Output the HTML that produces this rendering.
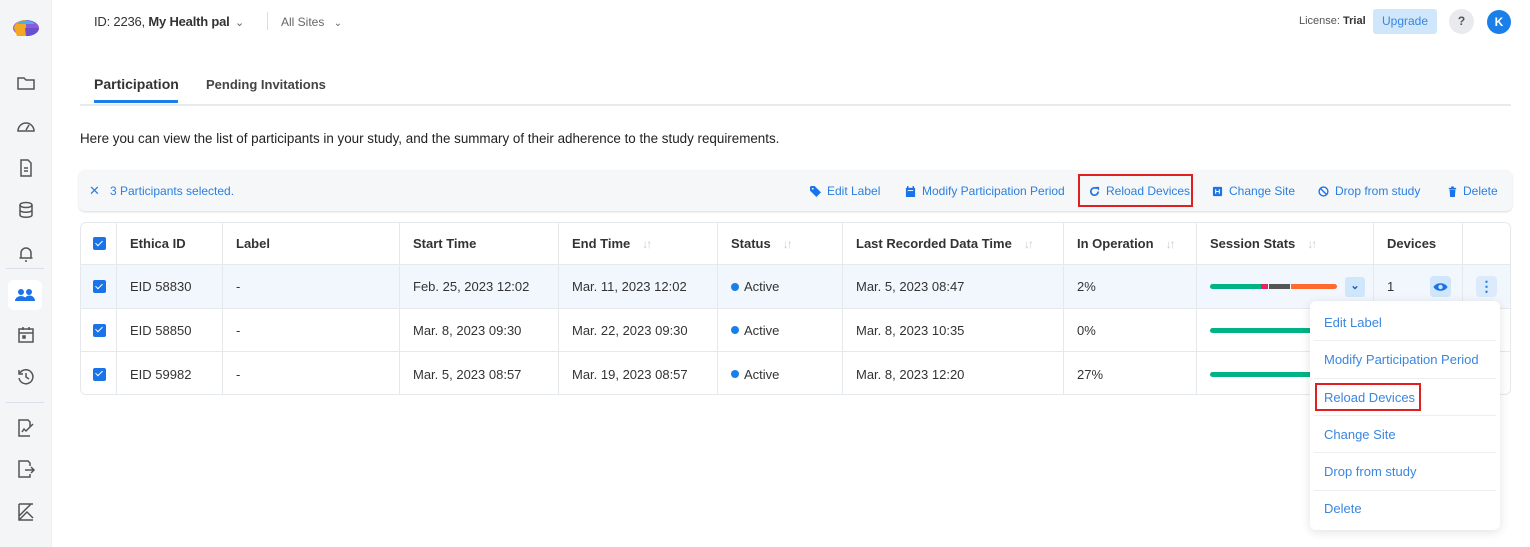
<!DOCTYPE html>
<html><head><meta charset="utf-8"><style>
*{box-sizing:border-box;margin:0;padding:0}
body{width:1530px;height:547px;overflow:hidden;background:#fff;font-family:"Liberation Sans",sans-serif;color:#222;position:relative;font-size:13px}
.side{position:absolute;left:0;top:0;width:52px;height:547px;background:#f4f5f6;border-right:1px solid #eceef0}
.ic{position:absolute;left:16px;width:20px;height:20px}
.abs{position:absolute}
.blue{color:#2a7fe0}
.tbl{position:absolute;left:80px;top:222px;width:1431px;border:1px solid #e6e9ec;border-radius:6px;overflow:hidden}
.tbl div.r{position:absolute;left:0;width:1431px;border-bottom:1px solid #e6e9ec}
.cell{position:absolute;top:0;height:100%;display:flex;align-items:center;padding-left:13px;border-right:1px solid #e6e9ec;font-size:13px;color:#333}
.h .cell{font-weight:bold;color:#333}
.cb{width:13px;height:13px;background:#1a73e8;border-radius:2px;position:relative}
.cb:after{content:"";position:absolute;left:4px;top:1.5px;width:3px;height:6px;border:solid #fff;border-width:0 1.6px 1.6px 0;transform:rotate(45deg)}
.sort{color:#ccc;margin-left:12px;font-weight:normal;font-size:12px;letter-spacing:-2px}
.dot{width:8px;height:8px;border-radius:50%;background:#1a7fe8;display:inline-block;margin-right:5px}
.bar{height:5px;border-radius:3px;background:#00b386}
.act{position:absolute;top:184px;font-size:12px;color:#2a7fe0;display:flex;align-items:center;gap:6px}
.act svg{width:11px;height:11px}
.menu{position:absolute;left:1310px;top:301px;width:190px;height:229px;background:#fff;border-radius:6px;box-shadow:0 2px 10px rgba(0,0,0,.12)}
.mi{position:absolute;left:14px;font-size:13px;color:#3a86e0}
.sep{position:absolute;left:4px;right:4px;height:1px;background:#eceef0}
</style></head><body>
<div class="side">
 <svg class="abs" style="left:11px;top:18px" width="30" height="22" viewBox="0 0 30 22"><ellipse cx="15" cy="10" rx="13" ry="8" fill="#8a5ad8"/><path d="M3 10a12 8 0 0 1 12-8v16H6z" fill="#f5a623"/><path d="M6 6a10 6 0 0 1 18 0z" fill="#3bb6e6"/><path d="M14 10h14a12 8 0 0 1-13 8z" fill="#6a4fcf"/></svg>
 <svg class="ic" style="top:73px" viewBox="0 0 20 20" fill="none" stroke="#555" stroke-width="1.5"><path d="M2 5h6l2 2h8v9H2z"/></svg>
 <svg class="ic" style="top:116px" viewBox="0 0 20 20" fill="none" stroke="#555" stroke-width="1.5"><path d="M2 15a8 8 0 1 1 16 0z"/><path d="M10 14l3-5"/></svg>
 <svg class="ic" style="top:158px" viewBox="0 0 20 20" fill="none" stroke="#555" stroke-width="1.5"><path d="M5 2h7l3 3v13H5z"/><path d="M8 10h4M8 13h4"/></svg>
 <svg class="ic" style="top:200px" viewBox="0 0 20 20" fill="none" stroke="#555" stroke-width="1.5"><ellipse cx="10" cy="5" rx="6" ry="2.5"/><path d="M4 5v10c0 3 12 3 12 0V5M4 10c0 3 12 3 12 0"/></svg>
 <svg class="ic" style="top:244px" viewBox="0 0 20 20" fill="none" stroke="#555" stroke-width="1.5"><path d="M5 14V9a5 5 0 0 1 10 0v5h1.5H3.5zM9 17h2"/></svg>
 <div class="abs" style="left:6px;top:268px;width:38px;height:1px;background:#dde"></div>
 <div class="abs" style="left:8px;top:280px;width:34px;height:30px;background:#fff;border-radius:6px"></div>
 <svg class="ic" style="top:286px;left:15px" viewBox="0 0 20 20" fill="#1a73e8"><circle cx="6" cy="6" r="3"/><circle cx="14" cy="6" r="3"/><path d="M0 15a6 5 0 0 1 12 0zM9 15a5 5 0 0 1 11 0z"/></svg>
 <svg class="ic" style="top:325px" viewBox="0 0 20 20" fill="none" stroke="#555" stroke-width="1.5"><rect x="3" y="4" width="14" height="13"/><path d="M3 8h14M7 2v3M13 2v3"/><rect x="7" y="11" width="2" height="2" fill="#555"/></svg>
 <svg class="ic" style="top:367px" viewBox="0 0 20 20" fill="none" stroke="#555" stroke-width="1.5"><path d="M4 6a7 7 0 1 1-1 5M3 3v4h4M10 6v4l3 2"/></svg>
 <div class="abs" style="left:6px;top:402px;width:38px;height:1px;background:#dde"></div>
 <svg class="ic" style="top:418px" viewBox="0 0 20 20" fill="none" stroke="#555" stroke-width="1.5"><path d="M14 9V4l-2-2H3v16h11M6 14l2-3 2 2 7-7"/></svg>
 <svg class="ic" style="top:459px" viewBox="0 0 20 20" fill="none" stroke="#555" stroke-width="1.5"><path d="M14 7V4l-2-2H3v16h11v-3M9 11h9M15 8l3 3-3 3"/></svg>
 <svg class="ic" style="top:502px" viewBox="0 0 20 20" fill="none" stroke="#555" stroke-width="1.5"><path d="M3 2v16h14M3 2h14M3 14l12-12M3 18l8-8 6 6"/></svg>
</div>

<div class="abs" style="left:94px;top:14px;font-size:13px;color:#333;font-weight:bold;letter-spacing:-0.2px"><span style="font-weight:normal">ID: 2236,</span> My Health pal <span style="color:#666;font-size:11px;font-weight:normal;margin-left:2px">&#8964;</span></div>
<div class="abs" style="left:267px;top:12px;width:1px;height:18px;background:#ddd"></div>
<div class="abs" style="left:281px;top:15px;font-size:12px;color:#666">All Sites <span style="font-size:10px;margin-left:6px">&#8964;</span></div>

<div class="abs" style="left:1299px;top:15px;font-size:11px;color:#555">License: <b style="color:#333">Trial</b></div>
<div class="abs" style="left:1373px;top:9px;width:64px;height:25px;background:#cfe6fb;border-radius:3px;color:#3a86e0;font-size:12px;text-align:center;line-height:25px">Upgrade</div>
<div class="abs" style="left:1449px;top:9px;width:25px;height:25px;background:#e8eaed;border-radius:50%;font-size:12px;text-align:center;line-height:25px;font-weight:bold;color:#555">?</div>
<div class="abs" style="left:1487px;top:10px;width:24px;height:24px;background:#1a7fe8;border-radius:50%;font-size:12px;text-align:center;line-height:24px;font-weight:bold;color:#fff">K</div>

<div class="abs" style="left:94px;top:76px;font-size:14px;font-weight:bold;color:#333">Participation</div>
<div class="abs" style="left:206px;top:77px;font-size:13px;font-weight:bold;color:#444">Pending Invitations</div>
<div class="abs" style="left:80px;top:104px;width:1431px;height:2px;background:#e8eaed"></div>
<div class="abs" style="left:94px;top:100px;width:84px;height:3px;background:#1a7fe8"></div>

<div class="abs" style="left:80px;top:131px;font-size:13.4px;color:#222">Here you can view the list of participants in your study, and the summary of their adherence to the study requirements.</div>

<div class="abs" style="left:79px;top:170px;width:1433px;height:41px;background:#f6f7f8;border-radius:6px;box-shadow:0 1px 2px rgba(0,0,0,.15)"></div>
<div class="abs blue" style="left:89px;top:183px;font-size:13px">&#10005;</div>
<div class="abs blue" style="left:110px;top:184px;font-size:12px">3 Participants selected.</div>
<div class="act" style="left:810px"><svg viewBox="0 0 12 12"><path d="M0 1v4l7 7 5-5-7-7H1z" fill="#1a73e8"/><circle cx="3" cy="3" r="1" fill="#f6f7f8"/></svg>Edit Label</div>
<div class="act" style="left:905px"><svg viewBox="0 0 12 12"><rect x="1" y="2" width="10" height="10" fill="#1a73e8"/><path d="M3 0v3M9 0v3" stroke="#1a73e8" stroke-width="1.5"/><path d="M3 5h6" stroke="#fff"/></svg>Modify Participation Period</div>
<div class="abs" style="left:1078px;top:174px;width:115px;height:33px;border:2px solid #e02020"></div>
<div class="act" style="left:1089px"><svg viewBox="0 0 12 12"><path d="M10 6a4 4 0 1 1-1.5-3.1" fill="none" stroke="#1a73e8" stroke-width="1.8"/><path d="M7 1h4v4z" fill="#1a73e8"/></svg>Reload Devices</div>
<div class="act" style="left:1212px"><svg viewBox="0 0 12 12"><rect x="1" y="1" width="10" height="10" rx="1" fill="#1a73e8"/><path d="M4 3.5v5M8 3.5v5M4 6h4" stroke="#fff" stroke-width="1.2"/></svg>Change Site</div>
<div class="act" style="left:1318px"><svg viewBox="0 0 12 12"><circle cx="6" cy="6" r="4.8" fill="none" stroke="#1a73e8" stroke-width="1.5"/><path d="M2.7 2.7l6.6 6.6" stroke="#1a73e8" stroke-width="1.5"/></svg>Drop from study</div>
<div class="act" style="left:1447px;gap:5px"><svg viewBox="0 0 12 12"><path d="M2 2h8v1.5H2zM4.5 0.5h3V2h-3zM2.8 4h6.4l-.6 8H3.4z" fill="#1a73e8"/></svg>Delete</div>

<div class="tbl" style="height:173px">
 <div class="r h" style="top:0;height:42px">
  <div class="cell" style="left:0;width:36px;padding-left:12px"><span class="cb"></span></div>
  <div class="cell" style="left:36px;width:106px">Ethica ID</div>
  <div class="cell" style="left:142px;width:177px">Label</div>
  <div class="cell" style="left:319px;width:159px">Start Time</div>
  <div class="cell" style="left:478px;width:159px">End Time<span class="sort">↓↑</span></div>
  <div class="cell" style="left:637px;width:125px">Status<span class="sort">↓↑</span></div>
  <div class="cell" style="left:762px;width:221px">Last Recorded Data Time<span class="sort">↓↑</span></div>
  <div class="cell" style="left:983px;width:133px">In Operation<span class="sort">↓↑</span></div>
  <div class="cell" style="left:1116px;width:177px">Session Stats<span class="sort">↓↑</span></div>
  <div class="cell" style="left:1293px;width:89px">Devices</div>
  <div class="cell" style="left:1382px;width:49px;border-right:0"></div>
 </div>
 <div class="r" style="top:42px;height:44px;background:#f2f7fd">
  <div class="cell" style="left:0;width:36px;padding-left:12px"><span class="cb"></span></div>
  <div class="cell" style="left:36px;width:106px">EID 58830</div>
  <div class="cell" style="left:142px;width:177px">-</div>
  <div class="cell" style="left:319px;width:159px">Feb. 25, 2023 12:02</div>
  <div class="cell" style="left:478px;width:159px">Mar. 11, 2023 12:02</div>
  <div class="cell" style="left:637px;width:125px"><span class="dot"></span>Active</div>
  <div class="cell" style="left:762px;width:221px">Mar. 5, 2023 08:47</div>
  <div class="cell" style="left:983px;width:133px">2%</div>
  <div class="cell" style="left:1116px;width:177px"><div style="display:flex;width:127px;height:5px;border-radius:3px;overflow:hidden"><div style="width:51px;background:#00b386"></div><div style="width:7px;background:#e8245c;margin-right:1px"></div><div style="width:21px;background:#555;margin-right:1px"></div><div style="flex:1;background:#ff6a2f"></div></div><div style="margin-left:8px;width:20px;height:20px;background:#cfe6fb;border-radius:3px;color:#1a5fb8;font-size:11px;text-align:center;line-height:18px;font-weight:bold">&#8964;</div></div>
  <div class="cell" style="left:1293px;width:89px">1<div style="margin-left:36px;width:21px;height:21px;background:#cfe6fb;border-radius:4px;display:flex;align-items:center;justify-content:center"><svg width="15" height="10" viewBox="0 0 15 10"><path d="M0.5 5C3 0 12 0 14.5 5C12 10 3 10 0.5 5z" fill="#1a73e8"/><circle cx="7.5" cy="5" r="2.2" fill="#cfe6fb"/></svg></div></div>
  <div class="cell" style="left:1382px;width:49px;border-right:0;padding-left:13px"><div style="width:21px;height:21px;background:#dcebfb;border-radius:4px;color:#1a73e8;text-align:center;font-weight:bold;font-size:14px;line-height:20px">&#8942;</div></div>
 </div>
 <div class="r" style="top:86px;height:43px">
  <div class="cell" style="left:0;width:36px;padding-left:12px"><span class="cb"></span></div>
  <div class="cell" style="left:36px;width:106px">EID 58850</div>
  <div class="cell" style="left:142px;width:177px">-</div>
  <div class="cell" style="left:319px;width:159px">Mar. 8, 2023 09:30</div>
  <div class="cell" style="left:478px;width:159px">Mar. 22, 2023 09:30</div>
  <div class="cell" style="left:637px;width:125px"><span class="dot"></span>Active</div>
  <div class="cell" style="left:762px;width:221px">Mar. 8, 2023 10:35</div>
  <div class="cell" style="left:983px;width:133px">0%</div>
  <div class="cell" style="left:1116px;width:177px"><div class="bar" style="width:127px"></div></div>
  <div class="cell" style="left:1293px;width:89px"></div>
 </div>
 <div class="r" style="top:129px;height:44px;border-bottom:0">
  <div class="cell" style="left:0;width:36px;padding-left:12px"><span class="cb"></span></div>
  <div class="cell" style="left:36px;width:106px">EID 59982</div>
  <div class="cell" style="left:142px;width:177px">-</div>
  <div class="cell" style="left:319px;width:159px">Mar. 5, 2023 08:57</div>
  <div class="cell" style="left:478px;width:159px">Mar. 19, 2023 08:57</div>
  <div class="cell" style="left:637px;width:125px"><span class="dot"></span>Active</div>
  <div class="cell" style="left:762px;width:221px">Mar. 8, 2023 12:20</div>
  <div class="cell" style="left:983px;width:133px">27%</div>
  <div class="cell" style="left:1116px;width:177px"><div class="bar" style="width:127px"></div></div>
  <div class="cell" style="left:1293px;width:89px"></div>
 </div>
</div>

<div class="menu">
 <div class="mi" style="top:14px">Edit Label</div>
 <div class="sep" style="top:39px"></div>
 <div class="mi" style="top:51px">Modify Participation Period</div>
 <div class="sep" style="top:77px"></div>
 <div class="abs" style="left:5px;top:82px;width:106px;height:28px;border:2px solid #e02020"></div>
 <div class="mi" style="top:89px">Reload Devices</div>
 <div class="sep" style="top:114px"></div>
 <div class="mi" style="top:126px">Change Site</div>
 <div class="sep" style="top:151px"></div>
 <div class="mi" style="top:163px">Drop from study</div>
 <div class="sep" style="top:189px"></div>
 <div class="mi" style="top:200px">Delete</div>
</div>
</body></html>
